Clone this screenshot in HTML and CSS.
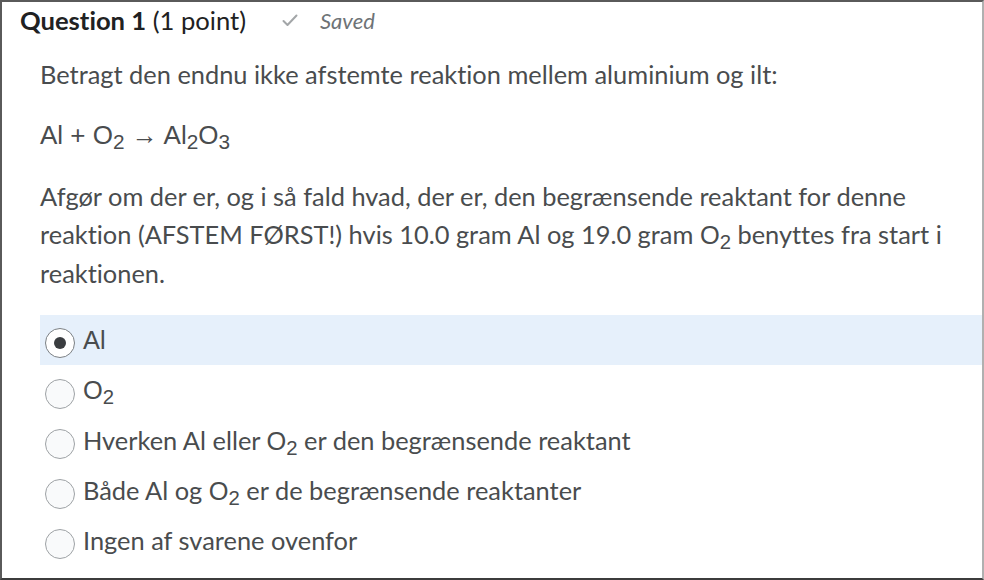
FILE: index.html
```html
<!DOCTYPE html>
<html lang="da">
<head>
<meta charset="utf-8">
<link rel="stylesheet" href="styles.css">
</head>
<body>
<div class="frame">
  <div class="header">
    <h2 class="title"><strong>Question 1</strong> (1 point)</h2>
    <span class="saved">
      <svg class="check" width="16" height="13" viewBox="0 0 16 13"><path d="M1.5 7 L5.5 11 L14.5 1.5" fill="none" stroke="#a3a6a8" stroke-width="2" stroke-linecap="round" stroke-linejoin="round"/></svg>
      <em>Saved</em>
    </span>
  </div>
  <div class="body">
    <p class="text">Betragt den endnu ikke afstemte reaktion mellem aluminium og ilt:</p>
    <p class="text chem eq">Al + O<sub>2</sub> → Al<sub>2</sub>O<sub>3</sub></p>
    <p class="text">Afgør om der er, og i så fald hvad, der er, den begrænsende reaktant for denne reaktion (AFSTEM FØRST!) hvis 10.0 gram Al og 19.0 gram <span class="chem">O<sub>2</sub></span> benyttes fra start i reaktionen.</p>
    <div class="options">
      <label class="option selected"><span class="radio"><span class="dot"></span></span><span class="chem">Al</span></label>
      <label class="option"><span class="radio"></span><span class="chem">O<sub>2</sub></span></label>
      <label class="option"><span class="radio"></span><span>Hverken Al eller <span class="chem">O<sub>2</sub></span> er den begrænsende reaktant</span></label>
      <label class="option"><span class="radio"></span><span>Både Al og <span class="chem">O<sub>2</sub></span> er de begrænsende reaktanter</span></label>
      <label class="option"><span class="radio"></span><span>Ingen af svarene ovenfor</span></label>
    </div>
  </div>
</div>
</body>
</html>
```

FILE: styles.css
```css
html, body {
  margin: 0;
  padding: 0;
  background: #ffffff;
}
body {
  font-family: Lato, "Noto Sans", sans-serif;
  color: #494c4e;
  font-variant-ligatures: none;
}
.frame {
  box-sizing: border-box;
  width: 984px;
  height: 580px;
  border-top: 2px solid #5a5a5a;
  border-left: 2px solid #5a5a5a;
  border-bottom: 2px solid #3c3c3c;
  border-right: 2px solid #b0b0b0;
  overflow: hidden;
}
.header {
  display: flex;
  align-items: center;
  height: 36px;
  padding-left: 18px;
}
.title {
  margin: 0;
  font-size: 25.6px;
  font-weight: 400;
  color: #202122;
}
.title strong {
  font-weight: 700;
}
.saved {
  display: flex;
  align-items: center;
  margin-left: 36px;
  color: #6e7376;
  font-size: 22px;
}
.saved .check {
  margin-right: 22px;
}
.body {
  padding: 17px 20px 0 38px;
}
.text {
  margin: 0 0 23px 0;
  font-size: 25.4px;
  line-height: 38px;
}
.eq {
  font-size: 26px;
}
.chem {
  font-family: "Liberation Sans", Arial, sans-serif;
}
sub {
  font-size: 0.8em;
  line-height: 0;
  vertical-align: -0.25em;
}
.options {
  margin-top: 19px;
}
.option {
  display: flex;
  align-items: center;
  height: 50px;
  padding-left: 5px;
  margin-right: -22px;
  font-size: 25.4px;
}
.option.selected {
  background: #e6f0fb;
}
.radio {
  box-sizing: border-box;
  width: 30px;
  height: 30px;
  border: 1.5px solid #9ea2a5;
  border-radius: 50%;
  background: #f9fafb;
  margin-right: 8px;
  margin-top: 8px;
  display: flex;
  align-items: center;
  justify-content: center;
  flex: none;
}
.selected .radio {
  margin-top: 6px;
  border-color: #7b8084;
  background: #ffffff;
}
.dot {
  width: 12px;
  height: 12px;
  border-radius: 50%;
  background: #3a3d40;
}
```
